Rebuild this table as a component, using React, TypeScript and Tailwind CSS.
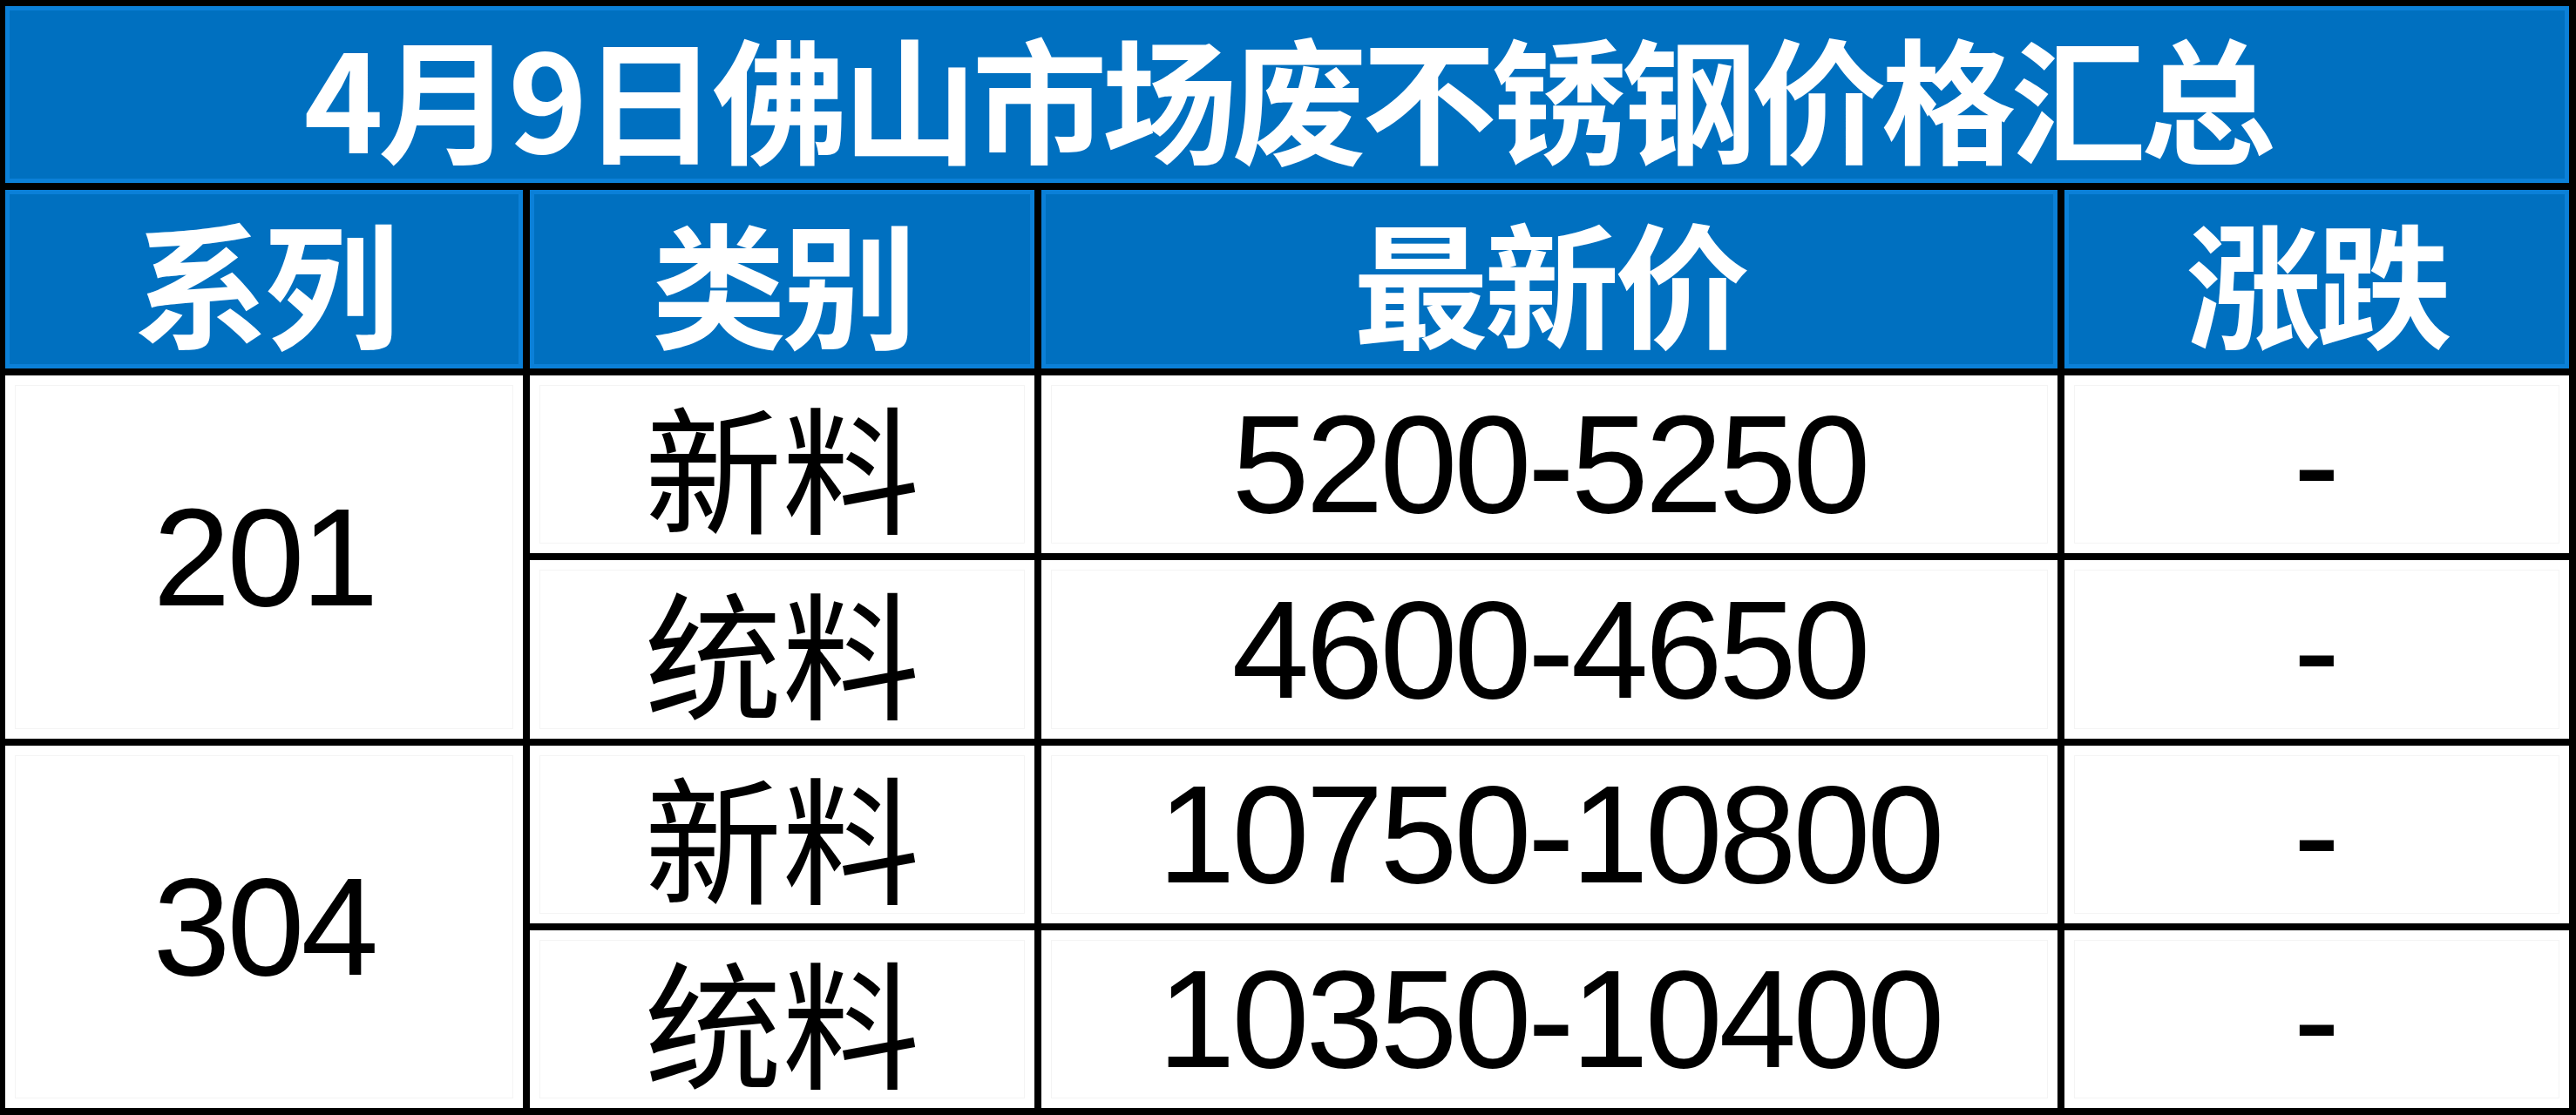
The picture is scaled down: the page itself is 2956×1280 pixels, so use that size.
import React from "react";

const cjk = "font-['Noto_Sans_CJK_SC',sans-serif]";
const num = "font-['Liberation_Sans','Noto_Sans_CJK_SC',sans-serif]";

const blueCell =
  "bg-[#0070c0] shadow-[inset_0_0_0_5px_#0b80d8] flex items-center justify-center text-white font-bold leading-none";
const whiteCell =
  "bg-white shadow-[inset_0_0_0_11px_#ffffff,inset_0_0_0_12px_#f4f4f4] flex items-center justify-center text-black leading-none";

export default function App() {
  const rows = [
    { series: "201", kind: "新料", price: "5200-5250" },
    { series: "201", kind: "统料", price: "4600-4650" },
    { series: "304", kind: "新料", price: "10750-10800" },
    { series: "304", kind: "统料", price: "10350-10400" },
  ];
  return (
    <div className="w-[2956px] h-[1280px] bg-black pt-[7px] pl-[6px] pr-[8px] pb-[8px] grid grid-cols-[594px_579px_1166px_579px] grid-rows-[203px_205px_204px_205px_204px_204px] gap-[8px]">
      <div className={`${blueCell} col-span-4 ${cjk} text-[155px] tracking-[-6px]`}>
        4月9日佛山市场废不锈钢价格汇总
      </div>
      <div className={`${blueCell} ${cjk} text-[155px] tracking-[-5px]`}>系列</div>
      <div className={`${blueCell} ${cjk} text-[155px] tracking-[-5px]`}>类别</div>
      <div className={`${blueCell} ${cjk} text-[155px] tracking-[-5px]`}>最新价</div>
      <div className={`${blueCell} ${cjk} text-[155px] tracking-[-5px]`}>涨跌</div>

      <div className={`${whiteCell} row-span-2 ${num} text-[160px] tracking-[-4px]`}>201</div>
      <div className={`${whiteCell} ${cjk} text-[158px]`}>{rows[0].kind}</div>
      <div className={`${whiteCell} ${num} text-[160px] tracking-[-4px]`}>{rows[0].price}</div>
      <div className={`${whiteCell} ${num} text-[160px]`}>-</div>

      <div className={`${whiteCell} ${cjk} text-[158px]`}>{rows[1].kind}</div>
      <div className={`${whiteCell} ${num} text-[160px] tracking-[-4px]`}>{rows[1].price}</div>
      <div className={`${whiteCell} ${num} text-[160px]`}>-</div>

      <div className={`${whiteCell} row-span-2 ${num} text-[160px] tracking-[-4px]`}>304</div>
      <div className={`${whiteCell} ${cjk} text-[158px]`}>{rows[2].kind}</div>
      <div className={`${whiteCell} ${num} text-[160px] tracking-[-4px]`}>{rows[2].price}</div>
      <div className={`${whiteCell} ${num} text-[160px]`}>-</div>

      <div className={`${whiteCell} ${cjk} text-[158px]`}>{rows[3].kind}</div>
      <div className={`${whiteCell} ${num} text-[160px] tracking-[-4px]`}>{rows[3].price}</div>
      <div className={`${whiteCell} ${num} text-[160px]`}>-</div>
    </div>
  );
}
